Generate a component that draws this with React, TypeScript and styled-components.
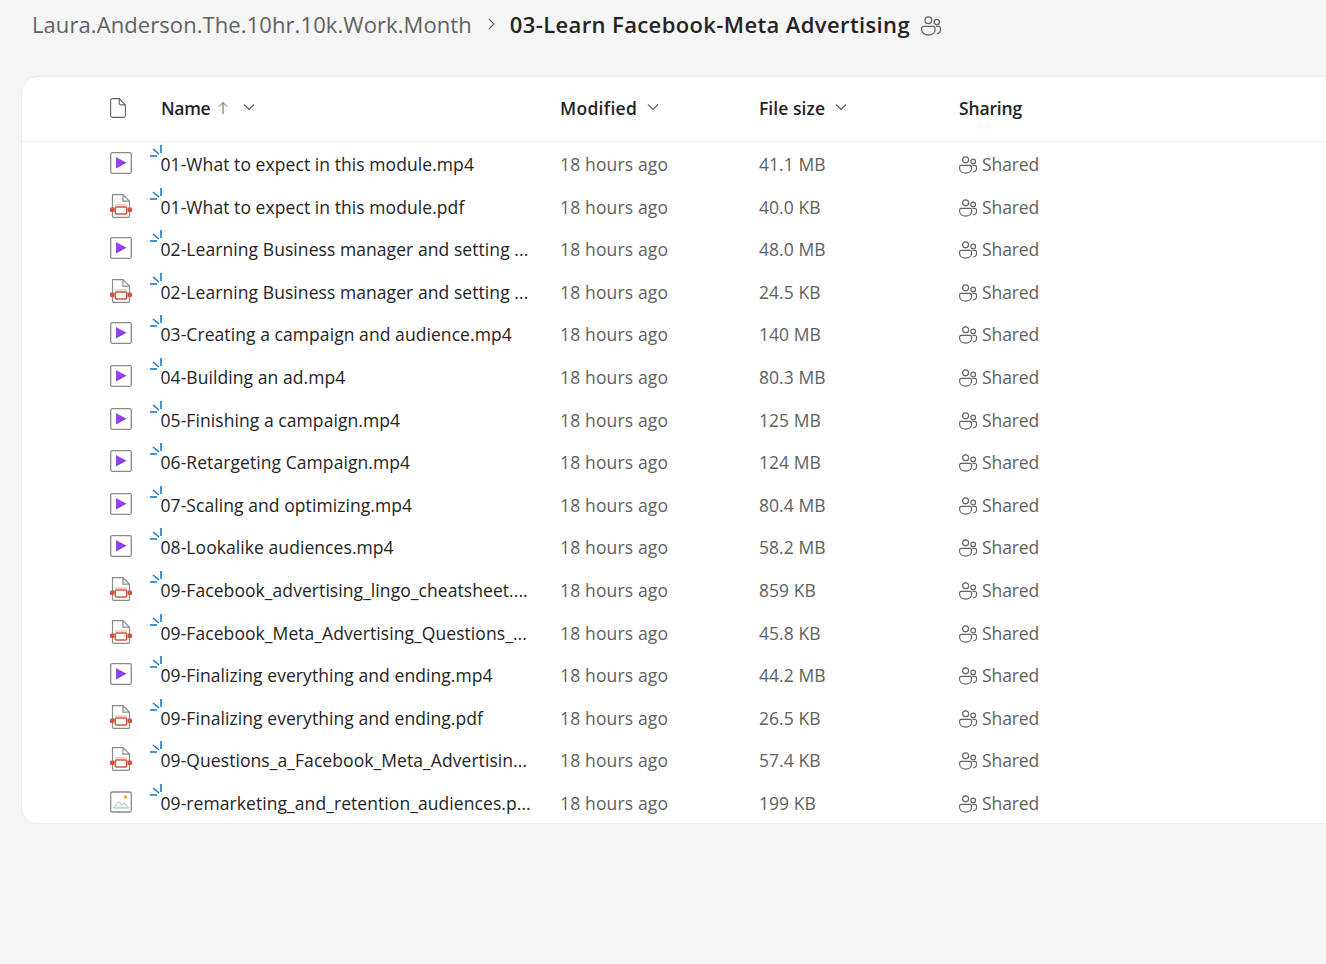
import styled, { createGlobalStyle } from "styled-components";

const FILES = [
  { name: "01-What to expect in this module.mp4", size: "41.1 MB", kind: "video" },
  { name: "01-What to expect in this module.pdf", size: "40.0 KB", kind: "pdf" },
  { name: "02-Learning Business manager and setting ...", size: "48.0 MB", kind: "video" },
  { name: "02-Learning Business manager and setting ...", size: "24.5 KB", kind: "pdf" },
  { name: "03-Creating a campaign and audience.mp4", size: "140 MB", kind: "video" },
  { name: "04-Building an ad.mp4", size: "80.3 MB", kind: "video" },
  { name: "05-Finishing a campaign.mp4", size: "125 MB", kind: "video" },
  { name: "06-Retargeting Campaign.mp4", size: "124 MB", kind: "video" },
  { name: "07-Scaling and optimizing.mp4", size: "80.4 MB", kind: "video" },
  { name: "08-Lookalike audiences.mp4", size: "58.2 MB", kind: "video" },
  { name: "09-Facebook_advertising_lingo_cheatsheet....", size: "859 KB", kind: "pdf" },
  { name: "09-Facebook_Meta_Advertising_Questions_...", size: "45.8 KB", kind: "pdf" },
  { name: "09-Finalizing everything and ending.mp4", size: "44.2 MB", kind: "video" },
  { name: "09-Finalizing everything and ending.pdf", size: "26.5 KB", kind: "pdf" },
  { name: "09-Questions_a_Facebook_Meta_Advertisin...", size: "57.4 KB", kind: "pdf" },
  { name: "09-remarketing_and_retention_audiences.p...", size: "199 KB", kind: "image" },
];

const GlobalStyle = createGlobalStyle`
  html, body {
    margin: 0;
    height: 100%;
    background: #f5f5f5;
    overflow: hidden;
  }
  body {
    font-family: "Open Sans", "Noto Sans", "Liberation Sans", sans-serif;
    color: #242424;
  }
`;

const Page = styled.div`
  width: 1326px;
  height: 964px;
  overflow: hidden;
`;

const Breadcrumb = styled.div`
  display: flex;
  align-items: center;
  height: 48px;
  padding-left: 32px;
  font-size: 22px;
  letter-spacing: 0.08px;
`;

const Crumb = styled.span`
  color: #616161;
`;

const Separator = styled.svg`
  width: 12px;
  height: 12px;
  margin: 0 13px 0 13px;
  fill: none;
  stroke: #616161;
  stroke-width: 1.1;
`;

const CurrentCrumb = styled.span`
  color: #242424;
  font-weight: 600;
  letter-spacing: 0.38px;
`;

const CrumbPeople = styled.span`
  display: flex;
  margin: 3px 0 0 11px;
  color: #616161;
`;

const Card = styled.section`
  margin: 28px 0 0 21px;
  width: 1340px;
  height: 748px;
  box-sizing: border-box;
  background: #fff;
  border: 1px solid #ececec;
  border-radius: 16px 0 0 16px;
`;

const HeaderRow = styled.div`
  display: grid;
  grid-template-columns: 139px 399px 199px 200px 1fr;
  align-items: center;
  height: 65px;
  padding-bottom: 2px;
  border-bottom: 1px solid #ececec;
  box-sizing: border-box;
`;

const HeaderCell = styled.div<{ $track: number }>`
  display: flex;
  align-items: center;
  font-size: 17.5px;
  font-weight: 600;
  letter-spacing: ${(p) => p.$track}px;
  color: #242424;
`;

const IconCell = styled.div`
  display: flex;
  padding-left: 88px;
`;

const RowIconCell = styled(IconCell)`
  margin-top: -2px;
`;

const SortArrow = styled.svg`
  width: 12px;
  height: 14px;
  margin-left: 7px;
  fill: none;
  stroke: #616161;
  stroke-width: 1;
`;

const Caret = styled.svg<{ $gap: number }>`
  width: 12px;
  height: 8px;
  margin: 0 0 3px ${(p) => p.$gap}px;
  fill: none;
  stroke: #616161;
  stroke-width: 1.1;
`;

const FileRow = styled.div`
  display: grid;
  grid-template-columns: 139px 399px 199px 200px 1fr;
  align-items: center;
  height: 42.6px;
  padding-top: 1.6px;
  box-sizing: border-box;
`;

const NameCell = styled.div`
  position: relative;
  margin-left: -0.5px;
  font-size: 17.5px;
  letter-spacing: 0.07px;
  color: #242424;
  white-space: nowrap;
`;

const NewMark = styled.svg`
  position: absolute;
  left: -11px;
  top: -7px;
  width: 13px;
  height: 13px;
  fill: none;
  stroke: #1b7ac4;
  stroke-width: 1.6;
`;

const MutedCell = styled.div<{ $track: number }>`
  display: flex;
  align-items: center;
  font-size: 17.5px;
  letter-spacing: ${(p) => p.$track}px;
  color: #616161;
  white-space: nowrap;
`;

const SharedIcon = styled.span`
  display: flex;
  margin: 2px 5px 0 0;
  color: #616161;
`;

function People({ size }: { size: number }) {
  return (
    <svg width={size} height={size} viewBox="0 0 18 18" fill="none" stroke="currentColor" strokeWidth="1.15">
      <circle cx="6.600" cy="3.800" r="3" />
      <circle cx="14.200" cy="5.400" r="2.300" />
      <path d="M2.300 9.300h8.600c1 0 1.700.7 1.700 1.700v1.300c0 2.800-2.500 4.800-5.900 4.800S.6 15.100.6 12.300V11c0-1 .7-1.700 1.700-1.700z" />
      <path d="M14.200 15.800c2.100 0 3.300-1.400 3.300-3.500v-1.200c0-1-.7-1.800-1.700-1.800h-2.300" />
    </svg>
  );
}

function BlankFile() {
  return (
    <svg width="16" height="20" viewBox="0 0 16 20" fill="none" stroke="#616161" strokeWidth="1.1">
      <path d="M2.500.6h6.700l6.200 6.300v10.600a1.900 1.900 0 0 1-1.900 1.900H2.500a1.900 1.900 0 0 1-1.900-1.900V2.500A1.900 1.900 0 0 1 2.500.6z" />
      <path d="M9.200.6v4.400a1.900 1.900 0 0 0 1.900 1.900h4.300" />
    </svg>
  );
}

function FileIcon({ kind }: { kind: string }) {
  if (kind === "video") {
    return (
      <svg width="22" height="22" viewBox="0 0 22 22">
        <defs>
          <linearGradient id="playFill" x1="0" y1="0" x2="1" y2="1">
            <stop offset="0" stopColor="#a24bf5" />
            <stop offset="1" stopColor="#7a35e8" />
          </linearGradient>
        </defs>
        <rect x="0.700" y="0.700" width="20.600" height="20.600" rx="1.500" fill="#fff" stroke="#8a8a8a" strokeWidth="1.300" />
        <path d="M6 5v11.500L16.500 10.700z" fill="url(#playFill)" />
      </svg>
    );
  }
  if (kind === "pdf") {
    return (
      <svg width="22" height="24" viewBox="0 0 22 24" fill="none">
        <path d="M2.500.7h10.500l6.500 6.500V22.300a1 1 0 0 1-1 1H3.500a1 1 0 0 1-1-1z" stroke="#8a8a8a" strokeWidth="1.200" fill="#fff" />
        <path d="M13 .7v6.500h6.500" stroke="#8a8a8a" strokeWidth="1.200" />
        <path d="M5 11h12" stroke="#e9b8ac" strokeWidth="1.200" />
        <rect x="0" y="13.500" width="4.500" height="4.500" rx="1.200" fill="#d2553a" />
        <rect x="17.500" y="13.500" width="4.500" height="4.500" rx="1.200" fill="#d2553a" />
        <rect x="5.300" y="13" width="11.400" height="7" rx="1" stroke="#d2553a" strokeWidth="1.500" fill="#fff" />
      </svg>
    );
  }
  return (
    <svg width="22" height="22" viewBox="0 0 22 22" fill="none">
      <rect x="0.700" y="1" width="20.600" height="20" rx="1.500" fill="#fff" stroke="#8a8a8a" strokeWidth="1.300" />
      <circle cx="15.500" cy="6" r="1.700" fill="#f0a23c" />
      <path d="M3.500 17l4-5.500c.6-.8 1.600-.8 2.200 0l2 2.500 1.500-1.300c.6-.5 1.500-.5 2 .1L18.500 17z" stroke="#9cc5c0" strokeWidth="1" fill="#eef6f5" />
    </svg>
  );
}

function FileRowItem({ name, size, kind }: { name: string; size: string; kind: string }) {
  return (
    <FileRow>
      <RowIconCell>
        <FileIcon kind={kind} />
      </RowIconCell>
      <NameCell>
        <NewMark viewBox="0 0 13 13">
          <path d="M11 0v8" />
          <path d="M3 4l6 5" />
          <path d="M0 11h7" />
        </NewMark>
        {name}
      </NameCell>
      <MutedCell $track={0.15}>18 hours ago</MutedCell>
      <MutedCell $track={0.05}>{size}</MutedCell>
      <MutedCell $track={-0.1}>
        <SharedIcon>
          <People size={18} />
        </SharedIcon>
        Shared
      </MutedCell>
    </FileRow>
  );
}

export default function App() {
  return (
    <Page>
      <GlobalStyle />
      <Breadcrumb>
        <Crumb>Laura.Anderson.The.10hr.10k.Work.Month</Crumb>
        <Separator viewBox="0 0 12 12">
          <path d="M4 1l5 5-5 5" />
        </Separator>
        <CurrentCrumb>03-Learn Facebook-Meta Advertising</CurrentCrumb>
        <CrumbPeople>
          <People size={20} />
        </CrumbPeople>
      </Breadcrumb>
      <Card>
        <HeaderRow>
          <IconCell>
            <BlankFile />
          </IconCell>
          <HeaderCell $track={-0.35}>
            Name
            <SortArrow viewBox="0 0 12 14">
              <path d="M6 13V1.500M2 5.500l4-4 4 4" />
            </SortArrow>
            <Caret $gap={14} viewBox="0 0 12 8">
              <path d="M1 1.500l5 5 5-5" />
            </Caret>
          </HeaderCell>
          <HeaderCell $track={0.3}>
            Modified
            <Caret $gap={10} viewBox="0 0 12 8">
              <path d="M1 1.500l5 5 5-5" />
            </Caret>
          </HeaderCell>
          <HeaderCell $track={0.05}>
            File size
            <Caret $gap={10} viewBox="0 0 12 8">
              <path d="M1 1.500l5 5 5-5" />
            </Caret>
          </HeaderCell>
          <HeaderCell $track={-0.15}>Sharing</HeaderCell>
        </HeaderRow>
        {FILES.map((file, i) => (
          <FileRowItem key={i} name={file.name} size={file.size} kind={file.kind} />
        ))}
      </Card>
    </Page>
  );
}
